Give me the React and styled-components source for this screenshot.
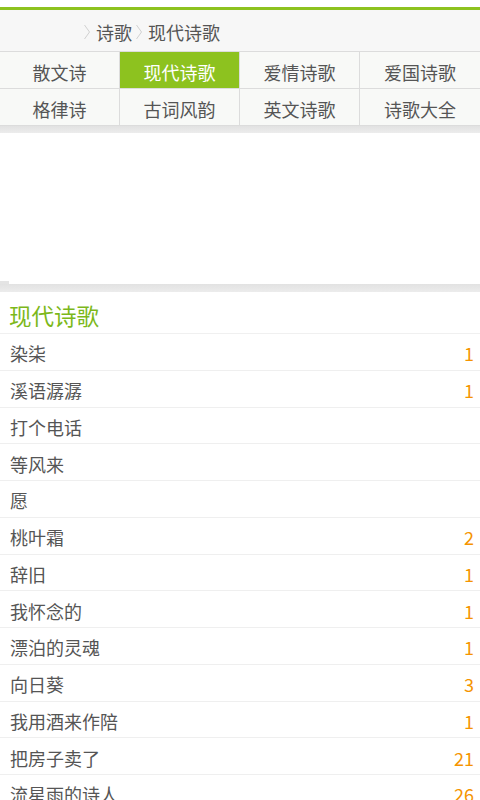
import React from "react";
import styled, { createGlobalStyle } from "styled-components";

const Global = createGlobalStyle`
  html, body { margin: 0; padding: 0; background: #fff; }
  body { font-family: "Noto Sans CJK SC", "Noto Sans", sans-serif; width: 480px; overflow: hidden; }
  * { box-sizing: border-box; }
`;

const Page = styled.div`
  width: 480px;
  height: 800px;
  overflow: hidden;
  background: #fff;
  padding-top: 7px;
`;

const TopLine = styled.div`
  height: 3px;
  background: #8dc21f;
`;

const Crumbs = styled.div`
  height: 41px;
  background: #f7f7f7;
  display: flex;
  align-items: center;
  padding: 2px 0 0 80px;
  font-size: 18px;
  color: #555;
`;

const Crumb = styled.span`
  line-height: 1;
`;

const ChevronBox = styled.svg`
  margin: 0 6px 0 4px;
  flex: none;
`;

const Chevron = () => (
  <ChevronBox width="6" height="16" viewBox="0 0 6 16">
    <polyline points="0.5,1 5.5,8 0.5,15" fill="none" stroke="#d0d0d0" strokeWidth="1" />
  </ChevronBox>
);

const Grid = styled.div`
  display: grid;
  grid-template-columns: repeat(4, 1fr);
  grid-auto-rows: 37px;
  border-top: 1px solid #dcdcdc;
  background: #f8f9f7;
`;

const Cell = styled.div`
  display: flex;
  align-items: center;
  justify-content: center;
  padding-top: 3px;
  font-size: 18px;
  color: ${(p) => (p.$active ? "#fff" : "#555")};
  background: ${(p) => (p.$active ? "#8dc21f" : "transparent")};
  border-right: ${(p) => (p.$last ? "none" : "1px solid #dcdcdc")};
  border-bottom: 1px solid #dcdcdc;
`;

const Band = styled.div`
  height: ${(p) => p.$h}px;
  background: linear-gradient(#e2e2e2, #ececec);
`;

const Blank = styled.div`
  height: 151px;
  background: #fff;
  position: relative;
`;

const Nub = styled.div`
  position: absolute;
  left: 0;
  bottom: 0;
  width: 9px;
  height: 3px;
  background: #e4e4e4;
`;

const Title = styled.div`
  height: 42px;
  display: flex;
  align-items: center;
  padding: 5px 0 0 9px;
  font-size: 22.5px;
  color: #7cb81a;
  border-bottom: 1px solid #f0f0f0;
`;

const Row = styled.div`
  height: 36.75px;
  display: flex;
  align-items: center;
  justify-content: space-between;
  padding: 3px 6px 0 10px;
  border-bottom: 1px solid #efefef;
  font-size: 18px;
`;

const Name = styled.span`
  color: #555;
`;

const Count = styled.span`
  color: #f59400;
`;

const tabs = [
  ["散文诗", false],
  ["现代诗歌", true],
  ["爱情诗歌", false],
  ["爱国诗歌", false],
  ["格律诗", false],
  ["古词风韵", false],
  ["英文诗歌", false],
  ["诗歌大全", false],
];

const items = [
  ["染柒", "1"],
  ["溪语潺潺", "1"],
  ["打个电话", ""],
  ["等风来", ""],
  ["愿", ""],
  ["桃叶霜", "2"],
  ["辞旧", "1"],
  ["我怀念的", "1"],
  ["漂泊的灵魂", "1"],
  ["向日葵", "3"],
  ["我用酒来作陪", "1"],
  ["把房子卖了", "21"],
  ["流星雨的诗人", "26"],
];

export default function App() {
  return (
    <Page>
      <Global />
      <TopLine />
      <Crumbs>
        <Chevron />
        <Crumb>诗歌</Crumb>
        <Chevron />
        <Crumb>现代诗歌</Crumb>
      </Crumbs>
      <Grid>
        {tabs.map(([t, a], i) => (
          <Cell key={t} $active={a} $last={i % 4 === 3}>
            {t}
          </Cell>
        ))}
      </Grid>
      <Band $h={7} />
      <Blank>
        <Nub />
      </Blank>
      <Band $h={8} />
      <Title>现代诗歌</Title>
      {items.map(([n, c]) => (
        <Row key={n}>
          <Name>{n}</Name>
          <Count>{c}</Count>
        </Row>
      ))}
    </Page>
  );
}
